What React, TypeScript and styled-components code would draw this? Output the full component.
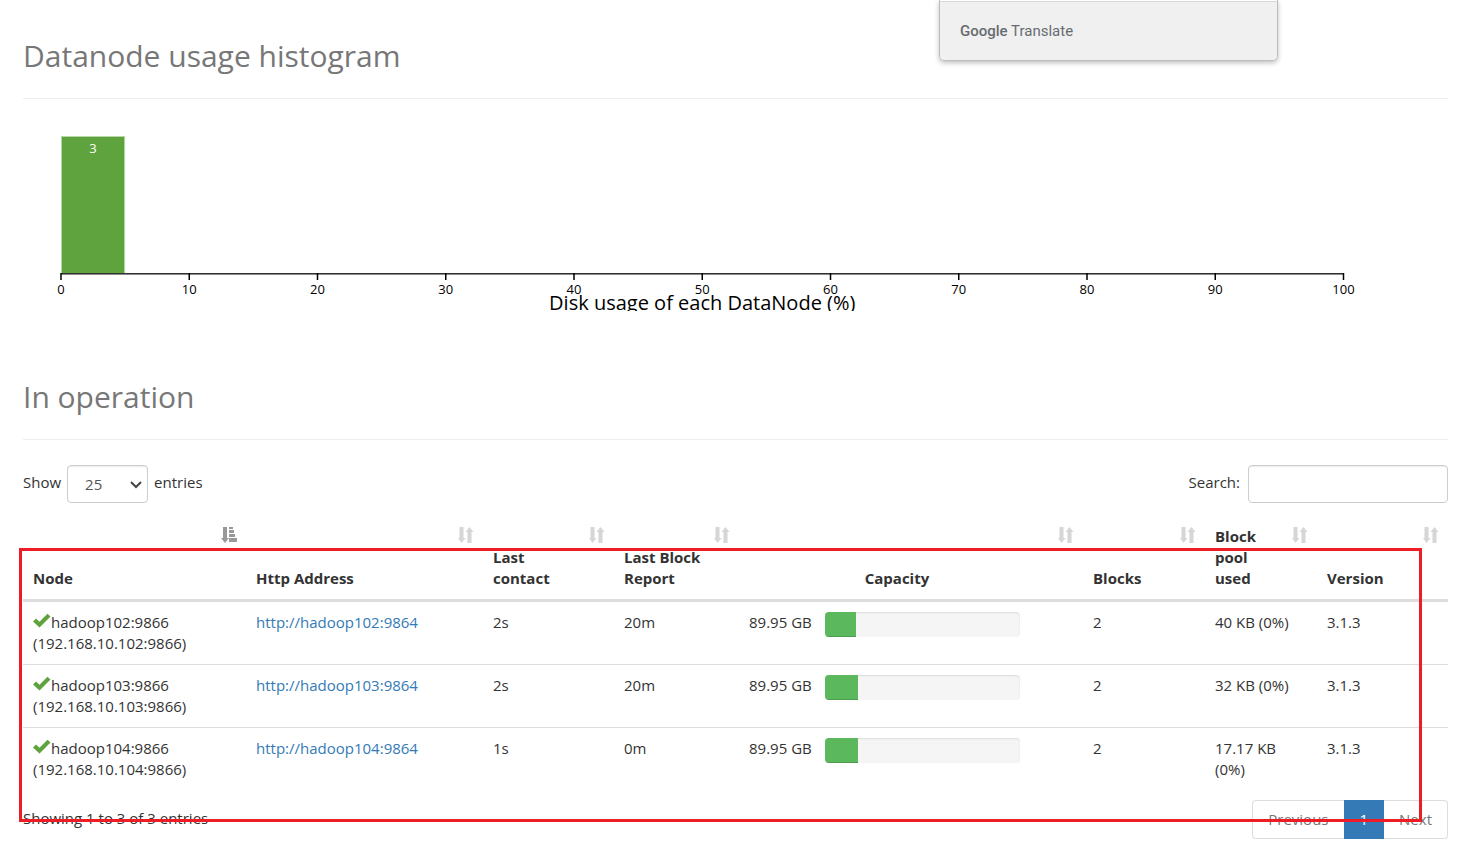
import React from "react";
import styled, { createGlobalStyle } from "styled-components";

const GlobalStyle = createGlobalStyle`
  *, *::before, *::after { box-sizing: border-box; }
  body {
    margin: 0;
    background: #fff;
    color: #333;
    font: 15px/21px "Open Sans", "Noto Sans", sans-serif;
  }
`;

const Page = styled.main`
  position: relative;
  padding: 36px 24px 20px 23px;
`;

const PageHeader = styled.header`
  padding-bottom: 22px;
  border-bottom: 1px solid #eee;
`;

const Title = styled.h1`
  margin: 0;
  font-size: 30px;
  line-height: 40px;
  font-weight: 400;
  color: #777;
`;

const Chart = styled.svg`
  display: block;
  width: 100%;
  height: 192px;
  margin: 20px 0 66px;
  overflow: hidden;
`;

const Bar = styled.rect`
  width: calc(5% - 1px);
  fill: #5fa33e;
  stroke: #b6d8a8;
`;

const TickText = styled.text`
  font-size: 13px;
  text-anchor: middle;
  fill: #000;
`;

const BarText = styled(TickText)`
  fill: #fff;
`;

const AxisTitle = styled(TickText)`
  font-size: 20px;
`;

const Toolbar = styled.div`
  display: flex;
  justify-content: space-between;
  align-items: center;
  margin: 25px 0 13px;
`;

const Field = styled.label`
  display: flex;
  align-items: center;
  gap: 6px;
`;

const FieldText = styled.span`
  padding-bottom: 4px;
`;

const SearchField = styled(Field)`
  gap: 8px;
`;

const SelectBox = styled.span`
  position: relative;
  display: block;
`;

const LengthSelect = styled.select`
  display: block;
  appearance: none;
  width: 81px;
  height: 38px;
  padding: 0 17px;
  border: 1px solid #ccc;
  border-radius: 4px;
  background: #fff;
  box-shadow: inset 0 1px 1px rgba(0, 0, 0, 0.075);
  color: #555;
  font: inherit;
`;

const Chevron = styled.svg`
  position: absolute;
  top: 15px;
  right: 5px;
  width: 14px;
  height: 10px;
  pointer-events: none;
`;

const SearchInput = styled.input`
  width: 200px;
  height: 38px;
  padding: 6px 12px;
  border: 1px solid #ccc;
  border-radius: 4px;
  box-shadow: inset 0 1px 1px rgba(0, 0, 0, 0.075);
  color: #555;
  font: inherit;
`;

const TableArea = styled.div`
  position: relative;
`;

const Table = styled.table`
  width: 100%;
  table-layout: fixed;
  border-collapse: separate;
  border-spacing: 0;
`;

const HeadCell = styled.th<{ $center?: boolean }>`
  position: relative;
  padding: 10px ${(p) => (p.$center ? 38 : 30)}px 10px 10px;
  border-bottom: 3px solid #ddd;
  vertical-align: bottom;
  text-align: ${(p) => (p.$center ? "center" : "left")};
  font-weight: 700;
`;

const SortGlyph = styled.svg<{ $active?: boolean }>`
  position: absolute;
  top: 11px;
  right: 9px;
  width: 16px;
  height: 16px;
  fill: ${(p) => (p.$active ? "#999" : "#d6d6d6")};
`;

const Row = styled.tr`
  & + & > td {
    border-top: 1px solid #ddd;
  }
`;

const Cell = styled.td`
  padding: 10px;
  vertical-align: top;
`;

const Check = styled.svg`
  width: 18px;
  height: 16px;
  vertical-align: -1px;
  fill: #5fa33e;
`;

const Link = styled.a`
  color: #337ab7;
  text-decoration: none;
`;

const Capacity = styled.div`
  display: flex;
  gap: 13px;
`;

const Track = styled.div`
  width: 195px;
  height: 25px;
  border-radius: 4px;
  overflow: hidden;
  background: #f5f5f5;
  box-shadow: inset 0 1px 2px rgba(0, 0, 0, 0.1);
`;

const Fill = styled.div`
  height: 100%;
  background: #5cb85c;
  box-shadow: inset 0 -1px 0 rgba(0, 0, 0, 0.15);
`;

const Footer = styled.div`
  display: flex;
  justify-content: space-between;
  margin-top: 10px;
`;

const Info = styled.div`
  padding-top: 8px;
`;

const Pager = styled.nav`
  display: flex;
`;

const PageButton = styled.button<{ $active?: boolean }>`
  height: 39px;
  padding: 0 15px;
  border: 1px solid ${(p) => (p.$active ? "#337ab7" : "#ddd")};
  background: ${(p) => (p.$active ? "#337ab7" : "#fff")};
  color: ${(p) => (p.$active ? "#fff" : "#777")};
  font: inherit;

  &:first-child {
    border-right: 0;
    border-radius: 4px 0 0 4px;
  }
  &:last-child {
    border-left: 0;
    border-radius: 0 4px 4px 0;
  }
`;

const Highlight = styled.div`
  position: absolute;
  top: 32px;
  bottom: -32px;
  left: -4px;
  right: 26px;
  border: 3px solid #ee1c25;
  pointer-events: none;
`;

const TranslatePopup = styled.aside`
  position: absolute;
  top: 0;
  right: 194px;
  width: 339px;
  height: 61px;
  padding-left: 20px;
  border: 1px solid #b9bdbb;
  border-top: 0;
  border-radius: 0 0 5px 5px;
  background: linear-gradient(#fff 1px, #d4d8d6 1px, #d4d8d6 2px, #f0f0f0 2px);
  box-shadow: 0 2px 5px rgba(0, 0, 0, 0.25);
  color: #676c70;
  font: 15px/62px Roboto, sans-serif;
`;

const Brand = styled.span`
  font-weight: 500;
`;

const columns = [
  { label: "Node", width: 223 },
  { label: "Http Address", width: 237 },
  { label: "Last contact", width: 131 },
  { label: "Last Block Report", width: 125 },
  { label: "Capacity", width: 344 },
  { label: "Blocks", width: 122 },
  { label: "Block pool used", width: 112 },
  { label: "Version", width: 131 },
];

const nodes = [
  { id: 102, contact: "2s", report: "20m", capacity: "89.95 GB", used: 16, blocks: 2, pool: "40 KB (0%)" },
  { id: 103, contact: "2s", report: "20m", capacity: "89.95 GB", used: 17, blocks: 2, pool: "32 KB (0%)" },
  { id: 104, contact: "1s", report: "0m", capacity: "89.95 GB", used: 17, blocks: 2, pool: "17.17 KB (0%)" },
];

const ticks = [0, 10, 20, 30, 40, 50, 60, 70, 80, 90, 100];

function SortIcon({ active }: { active?: boolean }) {
  return (
    <SortGlyph $active={active} viewBox="0 0 16 16" aria-hidden="true">
      {active ? (
        <>
          <path d="M2 0h4v11h2l-4 5-4-5h2z" />
          <path d="M8 0h4v2H8zM8 3h5v3H8zM8 7h6v3H8zM8 11h8v4H8z" />
        </>
      ) : (
        <path d="M1.500 0H5.500v11H7.500L3.500 16 0 11h1.500zM9.500 16V5H7.500L11.500 0 15.500 5h-2v11z" />
      )}
    </SortGlyph>
  );
}

function Histogram() {
  return (
    <Chart role="img" aria-label="Disk usage of each DataNode (%)">
      <svg x="38" y="0" width="90%" height="192" overflow="visible">
        <Bar x="0.5" y="17.5" height="137" />
        <BarText x="2.500%" y="34">3</BarText>
        <rect x="0" y="154" width="100%" height="1" fill="#333" />
        <rect x="0" y="155" width="100%" height="1" fill="#888" />
        {ticks.map((t) => (
          <g key={t}>
            <line x1={`${t}%`} x2={`${t}%`} y1="154" y2="161" stroke="#000" strokeWidth="1.500" />
            <TickText x={`${t}%`} y="175">{t}</TickText>
          </g>
        ))}
        <AxisTitle x="50%" y="191">Disk usage of each DataNode (%)</AxisTitle>
      </svg>
    </Chart>
  );
}

export default function App() {
  return (
    <>
      <GlobalStyle />
      <Page>
        <PageHeader>
          <Title>Datanode usage histogram</Title>
        </PageHeader>
        <Histogram />

        <PageHeader>
          <Title>In operation</Title>
        </PageHeader>
        <Toolbar>
          <Field>
            <FieldText>Show</FieldText>
            <SelectBox>
              <LengthSelect defaultValue="25">
                <option>10</option>
                <option>25</option>
                <option>50</option>
                <option>100</option>
              </LengthSelect>
              <Chevron viewBox="0 0 14 10" aria-hidden="true">
                <path d="M2 2l5 5 5-5" fill="none" stroke="#444" strokeWidth="2" />
              </Chevron>
            </SelectBox>
            <FieldText>entries</FieldText>
          </Field>
          <SearchField>
            <FieldText>Search:</FieldText>
            <SearchInput type="search" />
          </SearchField>
        </Toolbar>

        <TableArea>
          <Table>
            <colgroup>
              {columns.map((c) => (
                <col key={c.label} width={c.width} />
              ))}
            </colgroup>
            <thead>
              <tr>
                {columns.map((c) => (
                  <HeadCell key={c.label} scope="col" $center={c.label === "Capacity"}>
                    {c.label}
                    <SortIcon active={c.label === "Node"} />
                  </HeadCell>
                ))}
              </tr>
            </thead>
            <tbody>
              {nodes.map((n) => (
                <Row key={n.id}>
                  <Cell>
                    <Check viewBox="0 0 18 16" aria-hidden="true">
                      <path d="M0 8.500L3 5.500 6.500 8.800 14.500 0.800 17.500 3.600 6.500 14.600z" />
                    </Check>
                    hadoop{n.id}:9866
                    <br />
                    (192.168.10.{n.id}:9866)
                  </Cell>
                  <Cell>
                    <Link href={`http://hadoop${n.id}:9864`}>http://hadoop{n.id}:9864</Link>
                  </Cell>
                  <Cell>{n.contact}</Cell>
                  <Cell>{n.report}</Cell>
                  <Cell>
                    <Capacity>
                      {n.capacity}
                      <Track>
                        <Fill style={{ width: `${n.used}%` }} />
                      </Track>
                    </Capacity>
                  </Cell>
                  <Cell>{n.blocks}</Cell>
                  <Cell>{n.pool}</Cell>
                  <Cell>3.1.3</Cell>
                </Row>
              ))}
            </tbody>
          </Table>
          <Highlight />
        </TableArea>

        <Footer>
          <Info>Showing 1 to 3 of 3 entries</Info>
          <Pager aria-label="Table pages">
            <PageButton type="button">Previous</PageButton>
            <PageButton type="button" $active aria-current="page">1</PageButton>
            <PageButton type="button">Next</PageButton>
          </Pager>
        </Footer>

        <TranslatePopup>
          <Brand>Google</Brand> Translate
        </TranslatePopup>
      </Page>
    </>
  );
}
